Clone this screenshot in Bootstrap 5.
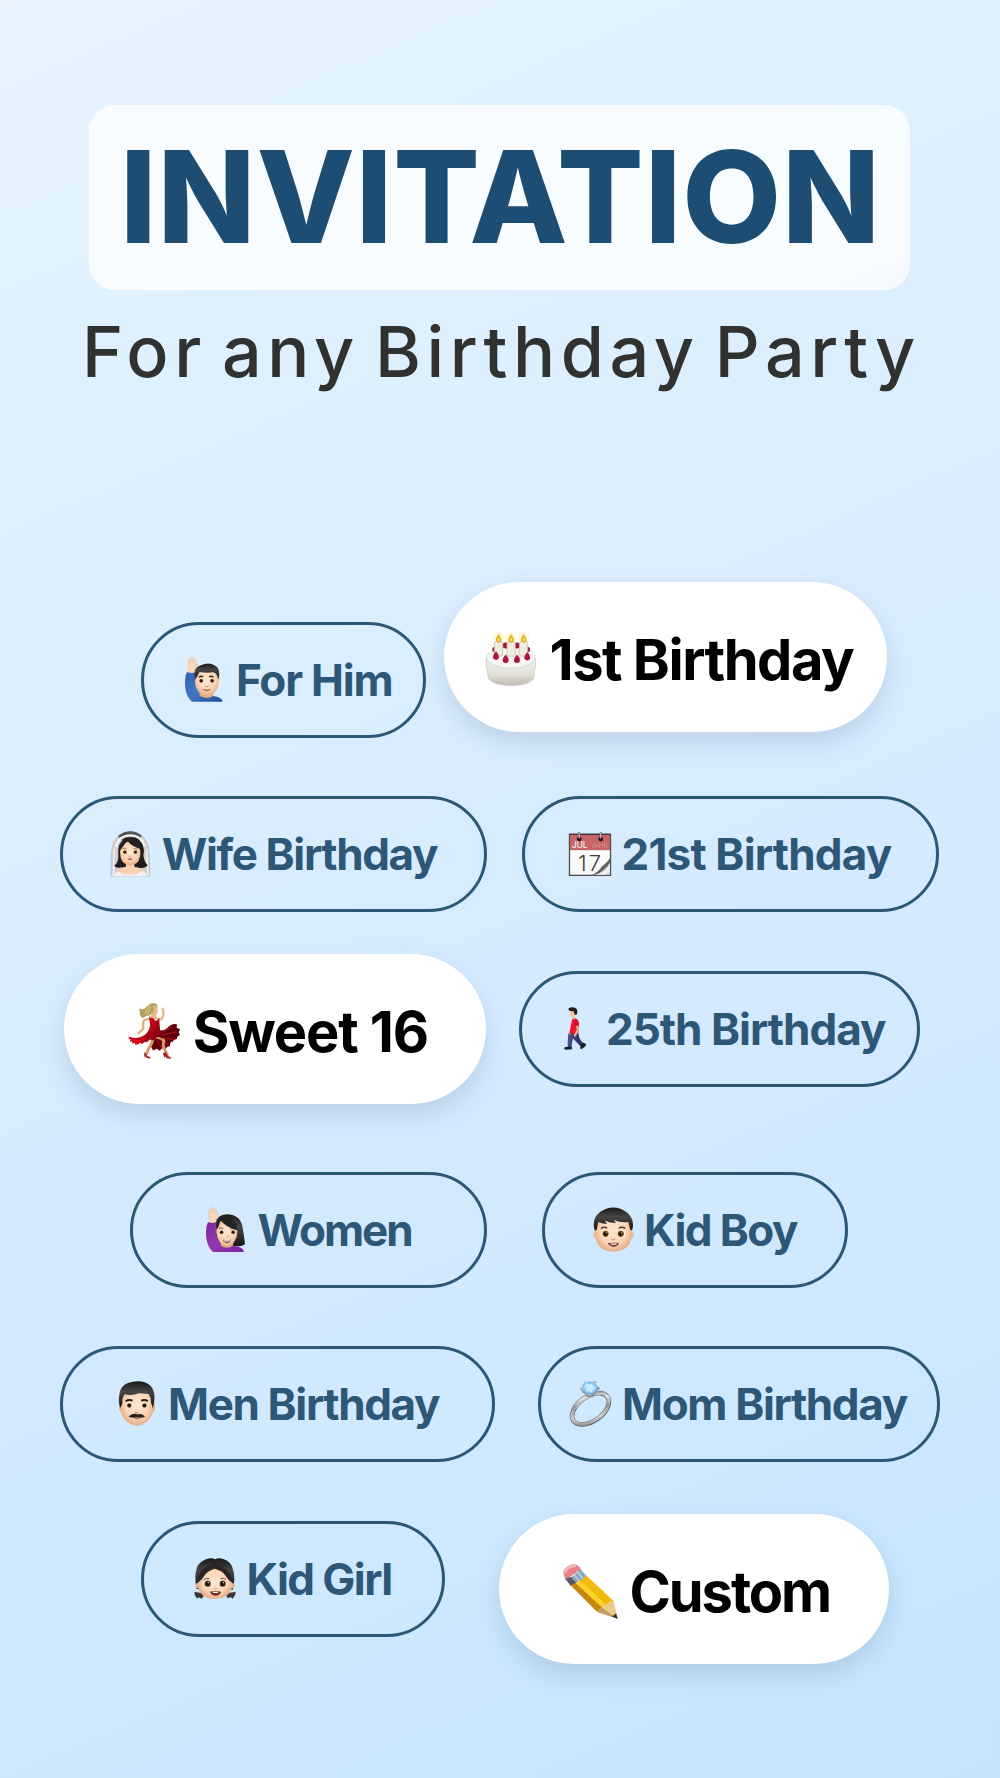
<!DOCTYPE html>
<html lang="en">
<head>
    <meta charset="UTF-8">
    <meta name="viewport" content="width=device-width, initial-scale=1.0">
    <title>Birthday Invitation</title>
    <link href="https://cdn.jsdelivr.net/npm/bootstrap@5.3.0/dist/css/bootstrap.min.css" rel="stylesheet">
    <style>
        body {
            min-height: 1778px;
            background: linear-gradient(157deg, #e9f4ff 0%, #dff1ff 17%, #daedff 42%, #d3e9ff 62%, #cee9ff 77%, #c4e4ff 100%);
            font-family: Inter, "Liberation Sans", sans-serif;
            overflow: hidden;
        }
        .invite { width: 1000px; height: 1778px; padding-top: 105px; }
        .title-box {
            width: 821px;
            height: 185px;
            margin-left: 89px;
            padding-left: 38px;
            border-radius: 26px;
            background: rgba(255, 255, 255, .76);
        }
        .title-box h1 { font-size: 128px; font-weight: 800; line-height: 183px; color: #1d4d73; }
        .subtitle { height: 110px; padding-left: 87px; font-size: 70px; font-weight: 500; line-height: 124px; word-spacing: -9px; color: #2f3231; }
        .fit { display: block; white-space: nowrap; }

        .pills { margin-top: 182px; }
        .pill {
            height: 116px;
            flex: none;
            border: 3px solid #2c5777;
            border-radius: 58px;
            color: #2c5777;
            font-size: 44px;
            font-weight: 700;
            line-height: 110px;
        }
        .pill svg { flex: none; margin-bottom: 1px; overflow: visible; }
        .pill-lg {
            height: 150px;
            padding-top: 5px;
            border: 0;
            border-radius: 75px;
            background: #fff;
            color: #000;
            font-size: 56px;
            line-height: 145px;
            box-shadow: 0 11px 24px rgba(52, 84, 112, .17);
        }
        .pill-lg .fit { padding-top: 2px; }

        .row-a { height: 214px; padding-left: 141px; gap: 18px; }
        .row-b { height: 158px; padding-left: 60px; gap: 35px; }
        .row-c { height: 218px; padding-left: 64px; gap: 33px; }
        .row-d { height: 174px; padding-left: 130px; gap: 55px; }
        .row-e { height: 168px; padding-left: 60px; gap: 43px; }
        .row-f { height: 150px; padding-left: 141px; gap: 54px; }
        .drop-a { margin-top: 40px; }
        .drop-c { margin-top: 17px; }
        .drop-f { margin-top: 7px; }

        /* width, space before the icon, space before the label */
        .p-him { width: 285px; padding-left: 41px; gap: 15px; }
        .p-first { width: 443px; padding-left: 42px; gap: 15.5px; }
        .p-wife { width: 427px; padding-left: 48px; gap: 12.7px; }
        .p-21 { width: 417px; padding-left: 44px; gap: 12.5px; }
        .p-sweet { width: 422px; padding-left: 64px; gap: 13.7px; }
        .p-25 { width: 401px; padding-left: 42px; gap: 21.5px; }
        .p-women { width: 357px; padding-left: 73px; gap: 13.5px; }
        .p-boy { width: 306px; padding-left: 47.5px; gap: 12.5px; }
        .p-men { width: 435px; padding-left: 56px; gap: 15px; }
        .p-mom { width: 402px; padding-left: 29px; gap: 13px; }
        .p-girl { width: 304px; padding-left: 49.5px; gap: 13px; }
        .p-custom { width: 390px; padding-left: 64px; gap: 13.5px; }
    </style>
</head>
<body>
    <!-- Shared gradients for the icons -->
    <svg width="0" height="0" class="position-absolute" aria-hidden="true">
        <defs>
            <radialGradient id="skin" cx=".5" cy=".45" r=".6"><stop offset="0" stop-color="#fde6d0"/><stop offset=".6" stop-color="#f9d5b6"/><stop offset="1" stop-color="#e0a27a"/></radialGradient>
            <linearGradient id="hair" x1="0" y1="0" x2="0" y2="1"><stop offset="0" stop-color="#1b191a"/><stop offset=".4" stop-color="#484546"/><stop offset="1" stop-color="#151314"/></linearGradient>
            <linearGradient id="blue" x1="0" y1="0" x2="1" y2="1"><stop offset="0" stop-color="#2f64b4"/><stop offset=".5" stop-color="#3f75c3"/><stop offset="1" stop-color="#1e4d97"/></linearGradient>
            <linearGradient id="purple" x1="0" y1="0" x2="1" y2="1"><stop offset="0" stop-color="#7c249b"/><stop offset=".5" stop-color="#9439b2"/><stop offset="1" stop-color="#7b1fa0"/></linearGradient>
            <linearGradient id="cake" x1="0" y1="0" x2="0" y2="1"><stop offset="0" stop-color="#f4f3f0"/><stop offset=".6" stop-color="#e3e0da"/><stop offset="1" stop-color="#bdb9b1"/></linearGradient>
            <linearGradient id="page" x1="0" y1="0" x2="1" y2="1"><stop offset=".4" stop-color="#fff"/><stop offset=".6" stop-color="#4e4e4e"/><stop offset=".76" stop-color="#ddd"/><stop offset="1" stop-color="#ccc"/></linearGradient>
            <linearGradient id="dress" x1="0" y1="0" x2="1" y2=".4"><stop offset="0" stop-color="#e5101f"/><stop offset=".5" stop-color="#d90a1b"/><stop offset="1" stop-color="#7d000c"/></linearGradient>
            <linearGradient id="silver" x1="0" y1="1" x2="1" y2="0"><stop offset="0" stop-color="#77777b"/><stop offset=".3" stop-color="#d0d0d3"/><stop offset=".55" stop-color="#97979b"/><stop offset=".75" stop-color="#e5e5e7"/><stop offset="1" stop-color="#626267"/></linearGradient>
            <linearGradient id="pants" x1="0" y1="0" x2="1" y2="0"><stop offset="0" stop-color="#4a4f87"/><stop offset="1" stop-color="#262b58"/></linearGradient>
        </defs>
    </svg>

    <main class="invite">
        <div class="title-box">
            <h1 class="mb-0"><span class="fit" data-width="746">INVITATION</span></h1>
        </div>
        <div class="subtitle"><span class="fit" data-width="827">For any Birthday Party</span></div>

        <div class="pills">
            <div class="row-a d-flex align-items-start">
                <div class="pill p-him drop-a d-flex align-items-center">
                    <svg width="38" height="45" viewBox="0 0 115 136">
                        <path d="M12 48C11 34 7 25 9 19l2-11c1-5 5-4 4 2l1 8 3-15c1-5 6-4 5 1l1 14 4-11c2-4 5-2 4 3l-2 14 4-3c4-3 4 0 3 3l-6 14-3 12z" fill="#fbd8b8" stroke="#e3b28d" stroke-width="1.3"/>
                        <path d="M6 45q15 6 28 0c-3 35 2 62 18 67l34 6q25 3 28 17H21C4 120 0 99 0 75q0-19 6-30z" fill="url(#blue)"/>
                        <path d="M44 105h42v13q-21 13-42-1z" fill="#e0a880"/>
                        <ellipse cx="66" cy="74" rx="36" ry="43" fill="url(#skin)"/>
                        <path d="M31 68q-9-36 17-43q25-11 42 1q19 8 12 42l-5-12q-2-8-11-10q-20 3-42-1q-6 11-13 23z" fill="url(#hair)"/>
                        <path d="M42 61q6-5 13-1M73 60q7-4 13 1" fill="none" stroke="#352320" stroke-width="4"/>
                        <circle cx="49" cy="72" r="5.5" fill="#38170e"/><circle cx="82" cy="72" r="5.5" fill="#38170e"/>
                        <path d="M61 88q5 4 10 0" fill="none" stroke="#c98a64" stroke-width="3"/>
                        <path d="M54 98q12 8 23 0q-12 3-23 0" fill="#9d4a43" stroke="#9d4a43" stroke-width="1.5"/>
                    </svg>
                    <span class="fit" data-width="153.5">For Him</span>
                </div>
                <div class="pill pill-lg p-first d-flex align-items-center">
                    <svg width="50" height="53" viewBox="0 0 150 158">
                        <path d="M1 76v25q4 9 5 30c4 34 134 36 138 0q0-20 4-30V76z" fill="url(#cake)" stroke="#c5c0b8" stroke-width="2"/>
                        <ellipse cx="75" cy="73" rx="73" ry="32" fill="#f7f6f5" stroke="#cfccc6" stroke-width="2"/>
                        <g fill="#a6133a"><circle cx="59" cy="37" r="9"/><circle cx="93" cy="37" r="9"/><circle cx="27" cy="49" r="8"/><circle cx="124" cy="49" r="8"/></g>
                        <g fill="#fff8b9" opacity=".6"><circle cx="38" cy="14" r="17"/><circle cx="75" cy="14" r="17"/><circle cx="113" cy="14" r="17"/></g>
                        <g fill="#f1edde" stroke="#bdb7a2" stroke-width="2"><rect x="25" y="25" width="25" height="44" rx="6"/><rect x="63" y="25" width="25" height="44" rx="6"/><rect x="100" y="25" width="25" height="44" rx="6"/></g>
                        <g fill="#edbd24" stroke="#c29224" stroke-width="1.5"><path d="M38 4q15 20 1 24q-16-3-1-24M75 4q15 20 1 24q-16-3-1-24M113 4q15 20 1 24q-16-3-1-24"/></g>
                        <g fill="#fff1a0"><circle cx="38" cy="20" r="3"/><circle cx="75" cy="20" r="3"/><circle cx="113" cy="20" r="3"/></g>
                        <g fill="#b21440" stroke="#8f0d30" stroke-width="1"><path d="M30 55q10 10 8 20q-8 9-16 0q-3-8 8-20M59 65q10 10 8 20q-8 9-16 0q-3-8 8-20M93 65q10 10 8 20q-8 9-16 0q-3-8 8-20M124 57q10 10 8 20q-8 9-16 0q-3-8 8-20"/></g>
                    </svg>
                    <span class="fit" data-width="302.5">1st Birthday</span>
                </div>
            </div>

            <div class="row-b d-flex align-items-start">
                <div class="pill p-wife d-flex align-items-center">
                    <svg width="39" height="45" viewBox="0 0 118 136">
                        <path d="M0 136Q-1 92 3 53Q10 7 58 1q47 4 56 52q4 40 3 83z" fill="#d0d0d3" stroke="#b5b5ba" stroke-width="2"/>
                        <path d="M22 14Q58-12 93 14l-6 14H28z" fill="#555557"/>
                        <path d="M10 53Q9 85 7 136M108 55q2 44 4 80" fill="none" stroke="#f5f5f5" stroke-width="4"/>
                        <path d="M9 106q16-12 13-34q-4-36 22-50q27-8 43 7q17 17 11 44q2 20 13 31q-13 12-29 6H29q-12 4-20-6" fill="#1d1b1c"/>
                        <path d="M15 48q7-34 44-35q35 1 43 35" fill="none" stroke="#f3f3f4" stroke-width="7"/>
                        <path d="M12 131q8-19 33-22V96h26v13q27 4 34 23l-11 4H21z" fill="#f7d0af"/>
                        <path d="M27 63q1-21 25-32q13 16 34 19q6 14 1 30q-4 22-29 24q-23-2-29-23z" fill="url(#skin)"/>
                        <path d="M25 62q11-14 24-33q16 21 45 27q-8-38-41-35q-28 9-28 41" fill="#252123"/>
                        <path d="M35 54q6-4 12 0M67 55q7-4 13 0" stroke="#66514c" stroke-width="2" fill="none"/>
                        <ellipse cx="42" cy="64" rx="7" ry="6" fill="#fff"/><ellipse cx="74" cy="64" rx="7" ry="6" fill="#fff"/>
                        <circle cx="42" cy="64" r="5.5" fill="#4d300d"/><circle cx="74" cy="64" r="5.5" fill="#4d300d"/>
                        <path d="M53 76q4 4 8 0" stroke="#c98a64" stroke-width="2" fill="none"/><path d="M49 85q8-5 17 0q-8 7-17 0" fill="#b6584e"/>
                        <path d="M9 136q5-14 15-13q17 13 33 7q18 6 35-8q12-1 17 14z" fill="#f4f3f4"/>
                    </svg>
                    <span class="fit" data-width="275.3">Wife Birthday</span>
                </div>
                <div class="pill p-21 d-flex align-items-center">
                    <svg width="42" height="44" viewBox="0 0 127 133">
                        <rect x="1.5" y="7" width="124" height="124" fill="#fbfbfb" stroke="#4c4c4c" stroke-width="4"/>
                        <rect x="3" y="9" width="121" height="46" fill="#c76566"/>
                        <path d="M2 7h123" stroke="#3d3838" stroke-width="4"/>
                        <path d="M72 35v12M79 32v15M86 35v12M93 32v15M100 34v13M107 31v16M114 34v13" stroke="#e39b9b" stroke-width="2"/>
                        <text x="8" y="47" fill="#fff" font-family="Inter, sans-serif" font-size="26" font-weight="400" textLength="48">JUL</text>
                        <text x="27" y="118" fill="#3f3f3f" font-family="Inter, sans-serif" font-size="66" font-weight="300" textLength="70">17</text>
                        <path d="M69 130q26-14 28-25q14-7 27-28v53z" fill="url(#page)"/>
                        <path d="M76 130q37-9 48-38v27q-11 11-31 11z" fill="#f4f4f4" opacity=".85"/>
                        <circle cx="31" cy="21" r="7" fill="#1a1212"/><circle cx="96" cy="21" r="7" fill="#1a1212"/>
                        <path d="M31 3v16M96 3v16" stroke="#555" stroke-width="6" stroke-linecap="round"/><path d="M31 3v14M96 3v14" stroke="#eee" stroke-width="2.5" stroke-linecap="round"/>
                    </svg>
                    <span class="fit" data-width="268.2">21st Birthday</span>
                </div>
            </div>

            <div class="row-c d-flex align-items-start">
                <div class="pill pill-lg p-sweet d-flex align-items-center">
                    <svg width="53" height="56" viewBox="0 0 158 170">
                        <path d="M83 78q18 12 34-1q15-17 31-12l-2 10 11 5-5 9 5 8q-10 3-10 12q-9-1-13 9q-9-2-8 14q-8-4-13 8l-9-5-9 10-9-6-11 5-7-12z" fill="#610009"/>
                        <path d="M101 90l31-18M98 98l48-11M98 106l44 5M93 111l30 17M85 112l18 27" stroke="#b40f1d" stroke-width="3"/>
                        <path d="M60 49q-14 1-15 9-1 10 0 20L30 92" fill="none" stroke="#e3ad7c" stroke-width="7" stroke-linecap="round" stroke-linejoin="round"/>
                        <path d="M82 43q12 11 19 5q8-9 3-31" fill="none" stroke="#e9b98b" stroke-width="7" stroke-linecap="round" stroke-linejoin="round"/>
                        <path d="M62 41q9-3 10-14h14l-5 25-14 12z" fill="#e9b98b"/>
                        <path d="M75 108q-3 17-14 30l-6 17M88 105q24 2 18 17q-3 9 12 35" fill="none" stroke="#d79b69" stroke-width="9" stroke-linecap="round"/>
                        <path d="M62 43l4 26-5 14q-8 16-29 22q-16 3-32-3l2 7 4 1-2 8 7-1 1 7 7-3 2 6q10 0 15-6l4 4 11-8 3 3 12-9 9 3 10-10 8-1 14 6q-4-10-10-20l-2-17-2-27q-8 17-18 1z" fill="url(#dress)"/>
                        <path d="M67 85L49 119M74 88l-17 25M80 90l-9 23M57 97q-20 15-39 14" stroke="#850611" stroke-width="2" fill="none"/>
                        <path d="M58 10q7-11 19-9q12 1 11 13l0 10-7 8-6-2-7 4q-5 6-16 6l-10 6-8-11 1-4-3-16q3 5 9 4 9 1 17-12" fill="#b09f59"/>
                        <path d="M78 14l9-2 1 20-7 6-8-5z" fill="#e9b98b"/>
                        <path d="M72 12q11-5 16 3M64 8L50 32M69 11L56 38" stroke="#ddd08d" stroke-width="3" fill="none"/>
                        <path d="M48 150l5 4 2 8 11 3v2l-11-1-6-10v9M105 153l8-2 5 10 10 5v2l-11-1-8-9v9" fill="#9f1720" stroke="#9f1720" stroke-width="2"/>
                    </svg>
                    <span class="fit" data-width="232">Sweet 16</span>
                </div>
                <div class="pill p-25 drop-c d-flex align-items-center">
                    <svg width="22.5" height="43" viewBox="0 0 68 130">
                        <path d="M13 79h31q0 17 15 31l-8 10-24-25q-4 14-4 29H11q0-27 2-45" fill="url(#pants)"/>
                        <path d="M3 121l19-1 3 8-22 1q-5-3 0-8M58 108l9 4q0 7-14 15l-5-2 4-10z" fill="#171926"/>
                        <path d="M16 72l-2 10 5 2 4-10" fill="#e7b58a"/>
                        <path d="M25 35q15-5 20 12l-2 33q-13 4-27 0z" fill="#ed1432"/>
                        <path d="M38 41q7 22 0 39" fill="none" stroke="#b60924" stroke-width="4"/>
                        <path d="M38 49l4 20-9 17" stroke="#e3b087" stroke-width="7" fill="none" stroke-linecap="round"/>
                        <path d="M32 39q13-2 13 18h-14z" fill="#dd0d2a"/>
                        <path d="M18 10l20-1q2 12-5 17l-1 11h-7l-1-8h-6z" fill="#efc39e"/>
                        <path d="M14 4q12-6 22 0q7 6 3 18l-6 2-4-11q-12 0-15-3z" fill="#201e20"/>
                    </svg>
                    <span class="fit" data-width="278">25th Birthday</span>
                </div>
            </div>

            <div class="row-d d-flex align-items-start">
                <div class="pill p-women d-flex align-items-center">
                    <svg width="39" height="45" viewBox="0 0 118 136">
                        <path d="M12 48C11 34 7 25 8 19l2-11c1-5 5-4 4 2l1 8 3-15c1-5 6-4 5 1l1 14 4-11c2-4 5-2 4 3l-2 14 4-3c4-3 4 0 3 3l-6 14-3 12z" fill="#fbd8b8" stroke="#e3b28d" stroke-width="1.3"/>
                        <path d="M30 50q2-27 33-28q38 0 47 35 5 29 8 55-10 9-27 6l-53-3q-14-30-8-65" fill="url(#hair)"/>
                        <path d="M6 45q14 6 25 0c-5 35 3 62 19 67l34 6q28 2 31 18H21C4 120 0 99 0 75q0-19 6-30z" fill="url(#purple)"/>
                        <path d="M45 104h37v13q-19 13-37 0z" fill="#dda47a"/>
                        <path d="M31 76q0-22 15-35q16 16 47 23 5 18-4 35-9 20-27 20-26-4-31-43" fill="url(#skin)"/>
                        <path d="M31 68q10-9 12-29 17 23 52 31l-2-16q-20-21-46-26-19 8-16 40" fill="#252324"/>
                        <path d="M39 65q7-4 13 0M74 67q7-4 13 0" stroke="#523830" stroke-width="2.5" fill="none"/>
                        <ellipse cx="47" cy="76" rx="8" ry="7" fill="#fff"/><ellipse cx="82" cy="76" rx="8" ry="7" fill="#fff"/>
                        <circle cx="47" cy="76" r="6" fill="#70430c"/><circle cx="82" cy="76" r="6" fill="#70430c"/>
                        <circle cx="47" cy="76" r="3.5" fill="#1c0e08"/><circle cx="82" cy="76" r="3.5" fill="#1c0e08"/>
                        <path d="M60 90q4 3 8 0" stroke="#c98a64" stroke-width="2" fill="none"/><path d="M51 98q13 5 25 0-4 11-13 11-9-1-12-11" fill="#923d3c"/><path d="M54 100q10 3 19 0l-3 4H57z" fill="#fff"/>
                    </svg>
                    <span class="fit" data-width="152.7">Women</span>
                </div>
                <div class="pill p-boy d-flex align-items-center">
                    <svg width="41" height="45" viewBox="0 0 124 136">
                        <circle cx="9" cy="84" r="9" fill="#eeb890"/><circle cx="115" cy="84" r="9" fill="#eeb890"/>
                        <path d="M6 57q8-40 56-41 48 1 56 41v28q-4 48-56 50Q10 133 6 85z" fill="url(#skin)"/>
                        <path d="M5 72Q-6 35 22 14q42-27 82 3 25 24 14 55l-6-5-5-22q-22 4-44-6l6 9q-20 1-33-7l6 10q-17-1-26-6L11 69z" fill="url(#hair)"/>
                        <path d="M24 65q10-7 19-1M78 64q10-6 20 1" fill="none" stroke="#49342e" stroke-width="4"/>
                        <ellipse cx="38" cy="81" rx="12" ry="11" fill="#fff"/><ellipse cx="85" cy="81" rx="12" ry="11" fill="#fff"/>
                        <circle cx="38" cy="81" r="9.5" fill="#855008"/><circle cx="84" cy="81" r="9.5" fill="#855008"/><circle cx="38" cy="81" r="6" fill="#160c07"/><circle cx="84" cy="81" r="6" fill="#160c07"/>
                        <circle cx="40" cy="78" r="2" fill="#fff"/><circle cx="86" cy="78" r="2" fill="#fff"/>
                        <path d="M56 97q6 5 12 0" stroke="#cf8f69" stroke-width="3" fill="none"/><path d="M45 109q17-2 34 0-5 11-17 11-13-1-17-11" fill="#7f2a24"/><path d="M52 110h21l-3 4H55z" fill="#fff"/>
                    </svg>
                    <span class="fit" data-width="152">Kid Boy</span>
                </div>
            </div>

            <div class="row-e d-flex align-items-start">
                <div class="pill p-men d-flex align-items-center">
                    <svg width="36" height="45" viewBox="0 0 109 136">
                        <ellipse cx="6" cy="79" rx="6" ry="13" fill="#e5aa80"/><ellipse cx="103" cy="79" rx="6" ry="13" fill="#e5aa80"/>
                        <path d="M5 45Q12 15 54 15q43 2 50 31v40q-7 43-50 50-43-7-49-50z" fill="url(#skin)"/>
                        <path d="M4 82Q-3 60 1 42 4 8 42 2q36-6 56 15 14 19 8 50l-4 15-5-17q0-16-7-26-17-1-29-2-23 9-45 3-8 14-6 28z" fill="url(#hair)"/>
                        <path d="M20 61q9-6 21-2M67 59q12-4 20 2" fill="none" stroke="#241b18" stroke-width="5.5"/>
                        <ellipse cx="31" cy="74" rx="9" ry="8" fill="#fff"/><ellipse cx="77" cy="74" rx="9" ry="8" fill="#fff"/>
                        <circle cx="31" cy="74" r="7" fill="#684006"/><circle cx="77" cy="74" r="7" fill="#684006"/><circle cx="31" cy="74" r="4.5" fill="#160c07"/><circle cx="77" cy="74" r="4.5" fill="#160c07"/>
                        <path d="M48 94q6 5 12 0" stroke="#cd8c65" stroke-width="3" fill="none"/><path d="M44 111h21q-11 10-21 0" fill="#b15c4a"/>
                        <path d="M29 108q9-11 24-9l2 2q16-5 24 8-14 4-25 1-15 3-25-2" fill="#242221"/>
                    </svg>
                    <span class="fit" data-width="270">Men Birthday</span>
                </div>
                <div class="pill p-mom d-flex align-items-center">
                    <svg width="41" height="45" viewBox="0 0 124 136">
                        <ellipse cx="62" cy="84" rx="63" ry="37" transform="rotate(-35 62 84)" fill="none" stroke="#67676b" stroke-width="14"/>
                        <ellipse cx="62" cy="83" rx="63" ry="37" transform="rotate(-35 62 83)" fill="none" stroke="url(#silver)" stroke-width="10"/>
                        <path d="M17 83Q48 42 97 38" stroke="#f1f1f1" stroke-width="2" fill="none"/>
                        <path d="M31 23l13 14 15 10 17-11 10-15M44 35l10 12h14l10-13" stroke="#8f8f94" stroke-width="4" fill="none"/>
                        <path d="M40 11l12-8h17l12 10 2 12-10 11-15 3-15-6-5-12z" fill="#7fc6f5" stroke="#5b94ca" stroke-width="1.5"/>
                        <path d="M49 10l18-2 10 12-11 14-15-3-7-11z" fill="#b5e5fd"/><path d="M52 4l-3 6-7 10m7-10 11 10 17 0m-10-12-7 12-9 11m9-11 6 14" stroke="#e9fbff" stroke-width="2" fill="none"/>
                        <circle cx="45" cy="2" r="3" fill="#c8c8c8"/><circle cx="77" cy="3" r="3" fill="#999"/><circle cx="33" cy="21" r="3.5" fill="#bbb"/><circle cx="86" cy="22" r="3.5" fill="#777"/>
                    </svg>
                    <span class="fit" data-width="283.7">Mom Birthday</span>
                </div>
            </div>

            <div class="row-f d-flex align-items-start">
                <div class="pill p-girl drop-f d-flex align-items-center">
                    <svg width="42" height="41" viewBox="0 0 126 123">
                        <path d="M20 104q-17-1-19-3 0 10 5 15l3 6 5-4 9 4q9-8 5-17zM105 104q17-1 20-3 0 10-5 15l-4 6-6-5-8 4q-8-8-4-17z" fill="#3a3437"/>
                        <path d="M8 93Q-1 56 10 25 22 5 48 1q8-1 15 3 10-6 27 0 24 8 29 38 5 30-3 53z" fill="url(#hair)"/>
                        <circle cx="12" cy="83" r="8" fill="#e9b189"/><circle cx="114" cy="83" r="8" fill="#e9b189"/>
                        <path d="M12 71Q17 31 62 29q44 0 53 42l-1 17q-7 33-51 35-43-2-50-34z" fill="url(#skin)"/>
                        <path d="M9 75q1-44 53-59 50 18 56 60-14-7-25-25-8-13-31-19-22 6-30 20-9 16-23 23" fill="#292527"/>
                        <path d="M62 4v19" stroke="#171315" stroke-width="2"/>
                        <path d="M29 65q8-6 17-3M80 62q9-4 16 3" stroke="#6d5048" stroke-width="3" fill="none"/>
                        <ellipse cx="41" cy="77" rx="12" ry="11" fill="#fff"/><ellipse cx="86" cy="77" rx="12" ry="11" fill="#fff"/>
                        <circle cx="41" cy="77" r="9.5" fill="#6d4511"/><circle cx="86" cy="77" r="9.5" fill="#6d4511"/><circle cx="41" cy="77" r="6.5" fill="#160c07"/><circle cx="86" cy="77" r="6.5" fill="#160c07"/><circle cx="43" cy="74" r="2" fill="#fff"/><circle cx="88" cy="74" r="2" fill="#fff"/>
                        <path d="M60 91q5 4 10 0" stroke="#c98a64" stroke-width="2" fill="none"/><path d="M48 101q16-4 33 0-3 12-16 12-14-1-17-12" fill="#812d28"/><path d="M55 101h19l-3 4H58z" fill="#fff"/>
                    </svg>
                    <span class="fit" data-width="142.7">Kid Girl</span>
                </div>
                <div class="pill pill-lg p-custom d-flex align-items-center">
                    <svg width="55" height="55" viewBox="0 0 165 165">
                        <path d="M2 32Q-5 18 17 5 34-5 47 7l8 10-47 30z" fill="#e98087"/>
                        <path d="M5 25Q13 6 36 6" stroke="#f6b6ba" stroke-width="7" fill="none" stroke-linecap="round"/>
                        <path d="M7 44q25-2 46-28l17 19q-17 24-46 31z" fill="#8ba6bf"/>
                        <path d="M7 44l17-5 15 17-15 10z" fill="#58595e"/><path d="M31 30l18 21M42 21l18 23" stroke="#c1d3e2" stroke-width="4"/>
                        <path d="M23 64q28-3 46-30l83 77q-12-1-17 9-13-1-17 12-10 1-15 12z" fill="#f3b80c"/>
                        <path d="M23 64l15-7 79 74q-11 3-14 13z" fill="#c48610"/>
                        <path d="M51 48l78 74-10 9-81-74z" fill="#ffd22b"/>
                        <path d="M103 144q5-11 15-12 4-13 17-12 5-10 17-9l12 53z" fill="#edcc8b"/>
                        <path d="M103 144q5-11 15-12l46 32z" fill="#c39a61"/>
                        <path d="M146 157q9-2 13-10l5 18z" fill="#303030"/>
                    </svg>
                    <span class="fit" data-width="197.5">Custom</span>
                </div>
            </div>
        </div>
    </main>

    <script>
        // Spread each line of text so that its ink fills data-width
        const ctx = document.createElement('canvas').getContext('2d');
        document.querySelectorAll('.fit').forEach((el) => {
            const style = getComputedStyle(el);
            const text = el.textContent;
            ctx.font = `${style.fontWeight} ${style.fontSize} ${style.fontFamily}`;
            const m = ctx.measureText(text);
            const gaps = (text.split(' ').length - 1) * (parseFloat(style.wordSpacing) || 0);
            const ink = m.actualBoundingBoxLeft + m.actualBoundingBoxRight + gaps;
            el.style.letterSpacing = (el.dataset.width - ink) / (text.length - 1) + 'px';
            el.style.marginLeft = m.actualBoundingBoxLeft + 'px';
        });
    </script>
    <script src="https://cdn.jsdelivr.net/npm/bootstrap@5.3.0/dist/js/bootstrap.bundle.min.js"></script>
</body>
</html>
